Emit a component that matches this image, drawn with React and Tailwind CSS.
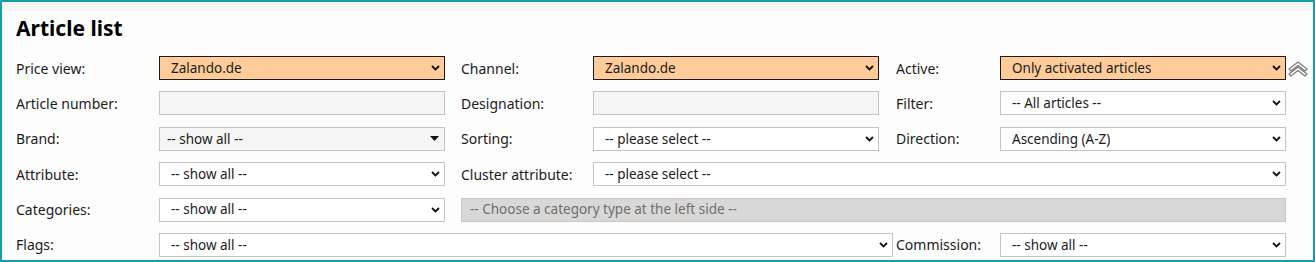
import React from 'react';

const Chevron = () => (
    <svg width="9" height="6" viewBox="0 0 9 6" className="shrink-0">
        <path d="M1 1 L4.5 4.5 L8 1" fill="none" stroke="#111" strokeWidth="1.8" />
    </svg>
);

const Caret = () => (
    <svg width="9" height="5" viewBox="0 0 9 5" className="shrink-0">
        <path d="M0 0 H9 L4.5 5 Z" fill="#111" />
    </svg>
);

const Select = ({ value, variant = 'default', className = '' }) => {
    const styles = {
        default: 'bg-white border-[#c3c3c3] pl-[11px]',
        orange: 'bg-[#ffcc99] border-[#1a1a1a] pl-[11px]',
        brand: 'bg-[#f5f5f5] border-[#c3c3c3] pl-[7px]',
    };
    return (
        <div className={`h-[24px] border flex items-center justify-between pr-[4px] text-[13.5px] text-[#1b1b1b] ${styles[variant]} ${className}`}>
            <span className="truncate">{value}</span>
            {variant === 'brand' ? <span className="pr-[1px]"><Caret /></span> : <Chevron />}
        </div>
    );
};

const Input = () => (
    <div className="h-[24px] border border-[#c3c3c3] bg-[#f5f5f5]"></div>
);

const Label = ({ children, className = '' }) => (
    <div className={`h-[24px] flex items-center text-[14px] text-[#1b1b1b] whitespace-nowrap ${className}`}>{children}</div>
);

const CollapseIcon = () => (
    <svg width="20" height="16" viewBox="0 0 20 16">
        <path d="M1 8 L10 1 L19 8 L17 10 L10 4.5 L3 10 Z" fill="#fafafa" stroke="#777" strokeWidth="1.1" strokeLinejoin="round" />
        <path d="M1 13 L10 6 L19 13 L17 15 L10 9.5 L3 15 Z" fill="#fafafa" stroke="#777" strokeWidth="1.1" strokeLinejoin="round" />
    </svg>
);

const App = () => {
    return (
        <div className="w-[1315px] h-[262px] border-2 border-[#1a9ca8] bg-[#fdfdfd] overflow-hidden" style={{ fontFamily: '"Noto Sans", "Open Sans", sans-serif' }}>
            <div className="h-[9px] bg-[#f6f6f6]"></div>
            <div className="pl-[14px] pt-[3px] h-[45px]">
                <h1 className="text-[21px] font-bold leading-[28px] text-black">Article list</h1>
            </div>
            <div className="pl-[14px] grid grid-cols-[143px_286px_148px_286px_121px_286px] gap-y-[11.4px] items-center">
                <Label>Price view:</Label>
                <Select value="Zalando.de" variant="orange" />
                <Label className="pl-[16px]">Channel:</Label>
                <Select value="Zalando.de" variant="orange" />
                <Label className="pl-[17px]">Active:</Label>
                <div className="relative">
                    <Select value="Only activated articles" variant="orange" />
                    <div className="absolute left-[288px] top-[5px]">
                        <CollapseIcon />
                    </div>
                </div>

                <Label>Article number:</Label>
                <Input />
                <Label className="pl-[16px]">Designation:</Label>
                <Input />
                <Label className="pl-[17px]">Filter:</Label>
                <Select value="-- All articles --" />

                <Label>Brand:</Label>
                <Select value="-- show all --" variant="brand" />
                <Label className="pl-[16px]">Sorting:</Label>
                <Select value="-- please select --" />
                <Label className="pl-[17px]">Direction:</Label>
                <Select value="Ascending (A-Z)" />

                <Label>Attribute:</Label>
                <Select value="-- show all --" />
                <Label className="pl-[16px]">Cluster attribute:</Label>
                <Select value="-- please select --" className="col-span-3" />

                <Label>Categories:</Label>
                <Select value="-- show all --" />
                <div className="col-span-4 ml-[16px] h-[24px] border border-[#c6c6c6] bg-[#d9d8d7] flex items-center pl-[8px] text-[13.5px] text-[#6f6f6f]">
                    -- Choose a category type at the left side --
                </div>

                <Label>Flags:</Label>
                <div className="col-span-3">
                    <Select value="-- show all --" className="w-[734px]" />
                </div>
                <Label className="pl-[17px]">Commission:</Label>
                <Select value="-- show all --" />
            </div>
        </div>
    );
};

export default App;
